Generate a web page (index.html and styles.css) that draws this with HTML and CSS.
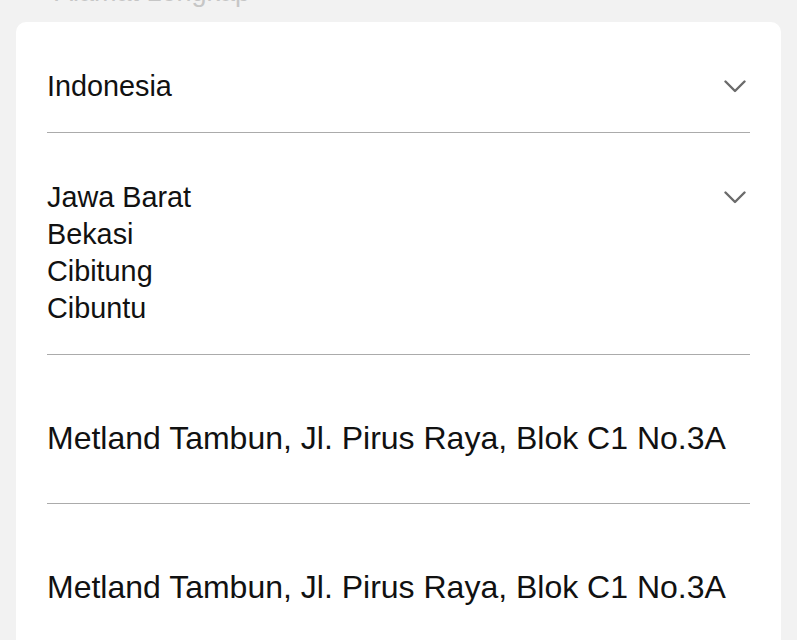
FILE: index.html
```html
<!DOCTYPE html>
<html lang="id">
<head>
  <meta charset="UTF-8" />
  <meta name="viewport" content="width=device-width, initial-scale=1.0" />
  <title>Alamat</title>
  <link rel="stylesheet" href="styles.css">
</head>
<body>

  <div class="section-title">Alamat Lengkap</div>

  <div class="card">
    <div class="row select">
      <div class="value">Indonesia</div>
      <svg class="chevron" width="22" height="13" viewBox="0 0 22 13">
        <path d="M1.5 1.5 L11 11 L20.5 1.5" fill="none" stroke="#6b6b6b" stroke-width="2.4" stroke-linecap="round" stroke-linejoin="round"/>
      </svg>
    </div>

    <div class="row select">
      <div class="value">
        <div>Jawa Barat</div>
        <div>Bekasi</div>
        <div>Cibitung</div>
        <div>Cibuntu</div>
      </div>
      <svg class="chevron" width="22" height="13" viewBox="0 0 22 13">
        <path d="M1.5 1.5 L11 11 L20.5 1.5" fill="none" stroke="#6b6b6b" stroke-width="2.4" stroke-linecap="round" stroke-linejoin="round"/>
      </svg>
    </div>

    <div class="row address">
      <div class="value">Metland Tambun, Jl. Pirus Raya, Blok C1 No.3A</div>
    </div>

    <div class="row address">
      <div class="value">Metland Tambun, Jl. Pirus Raya, Blok C1 No.3A</div>
    </div>
  </div>

</body>
</html>
```

FILE: styles.css
```css
/* Reset */
* {
  margin: 0;
  padding: 0;
  box-sizing: border-box;
}

body {
  font-family: 'Liberation Sans', Arial, sans-serif;
  background: #f2f2f2;
  color: #111;
  overflow: hidden;
}

/* Section header (scrolled off the top) */
.section-title {
  margin: -26px 0 11px;
  padding-left: 55px;
  font-size: 27px;
  line-height: 37px;
  color: #c6c6c6;
}

/* Card */
.card {
  margin: 0 16px;
  background: #fff;
  border-radius: 10px;
  padding: 0 31px;
}

.row {
  display: flex;
  justify-content: space-between;
  align-items: flex-start;
  border-bottom: 1px solid #ababab;
}

.row.select {
  padding: 46px 0 27px;
}

.row.select .value {
  font-size: 28.8px;
  line-height: 37px;
}

.chevron {
  margin: 12px 4px 0 0;
  flex-shrink: 0;
}

.row.address {
  padding: 65px 0 46px;
}

.row.address .value {
  font-size: 32px;
  line-height: 37px;
}
```
